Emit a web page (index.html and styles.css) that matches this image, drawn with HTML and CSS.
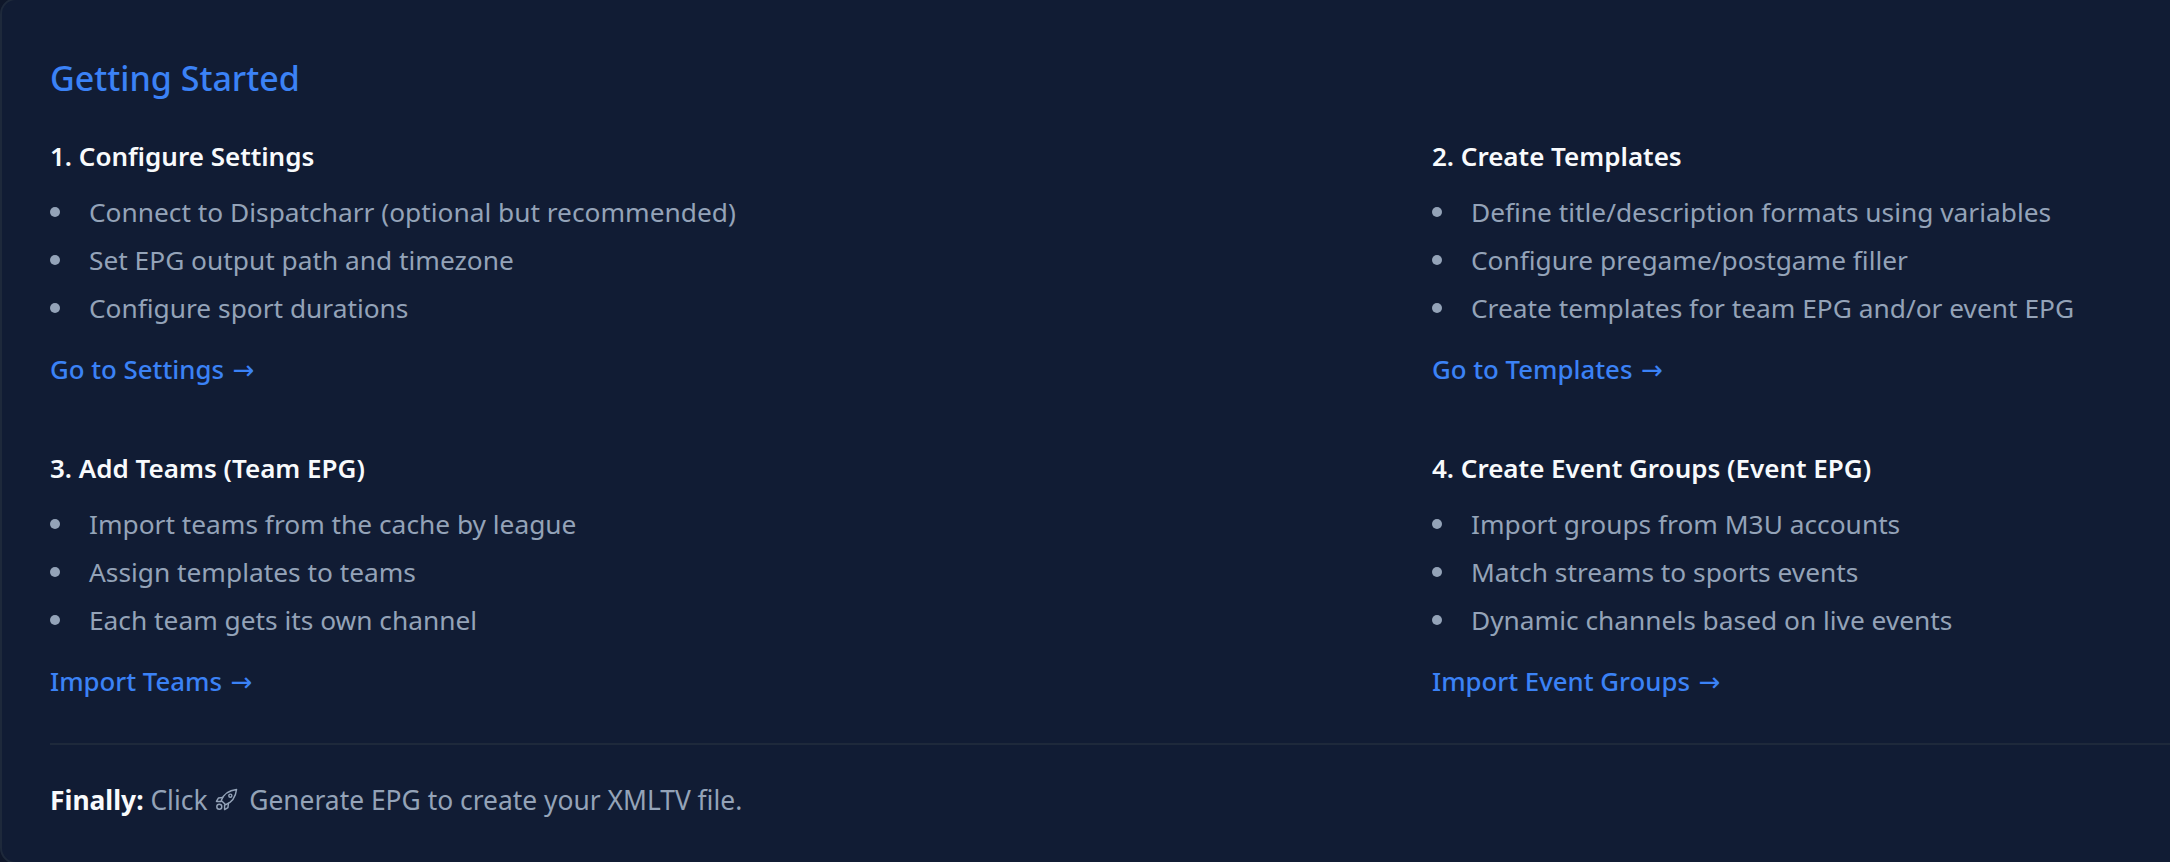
FILE: index.html
```html
<!DOCTYPE html>
<html lang="en">
<head>
    <meta charset="UTF-8">
    <title>Getting Started</title>
    <link rel="stylesheet" href="styles.css">
</head>
<body>
    <div class="card">
        <h2 class="card-title">Getting Started</h2>
        <div class="steps">
            <div class="step">
                <h3>1. Configure Settings</h3>
                <ul>
                    <li>Connect to Dispatcharr (optional but recommended)</li>
                    <li>Set EPG output path and timezone</li>
                    <li>Configure sport durations</li>
                </ul>
                <a class="step-link" href="#">Go to Settings <span class="arrow">→</span></a>
            </div>
            <div class="step">
                <h3>2. Create Templates</h3>
                <ul>
                    <li>Define title/description formats using variables</li>
                    <li>Configure pregame/postgame filler</li>
                    <li>Create templates for team EPG and/or event EPG</li>
                </ul>
                <a class="step-link" href="#">Go to Templates <span class="arrow">→</span></a>
            </div>
            <div class="step">
                <h3>3. Add Teams (Team EPG)</h3>
                <ul>
                    <li>Import teams from the cache by league</li>
                    <li>Assign templates to teams</li>
                    <li>Each team gets its own channel</li>
                </ul>
                <a class="step-link" href="#">Import Teams <span class="arrow">→</span></a>
            </div>
            <div class="step">
                <h3>4. Create Event Groups (Event EPG)</h3>
                <ul>
                    <li>Import groups from M3U accounts</li>
                    <li>Match streams to sports events</li>
                    <li>Dynamic channels based on live events</li>
                </ul>
                <a class="step-link" href="#">Import Event Groups <span class="arrow">→</span></a>
            </div>
        </div>
        <p class="finally"><strong>Finally:</strong> Click
            <svg class="rocket" viewBox="0 0 24 24" fill="none" stroke="currentColor" stroke-width="1.5" stroke-linejoin="round" stroke-linecap="round">
                <path d="M9 15.5 L6.5 13 C8.5 7.5 14 2.5 22.5 1.5 C21.5 10 16.5 15.5 11 17.5 Z"/>
                <path d="M8 10 L3.5 10.5 L1.5 14 L6.5 14"/>
                <path d="M14 16 L13.5 20.5 L10 22.5 L10 17.8"/>
                <circle cx="16" cy="8" r="1.6"/>
                <circle cx="4.5" cy="19.5" r="2.6"/>
            </svg>
            Generate EPG to create your XMLTV file.</p>
    </div>
</body>
</html>
```

FILE: styles.css
```css
html, body {
    margin: 0;
    padding: 0;
    height: 100%;
    overflow: hidden;
    background-color: #0f172a;
}
body {
    font-family: "Noto Sans", "Open Sans", Arial, sans-serif;
    color: #94a3b8;
}
.card {
    box-sizing: border-box;
    width: 2818px;
    height: 866px;
    margin-top: -2px;
    padding: 59px 48px 0 48px;
    background-color: #111c34;
    border: 2px solid #1e293b;
    border-radius: 16px;
}
.card-title {
    margin: 0 0 42px;
    font-size: 34px;
    line-height: 38px;
    font-weight: 500;
    color: #3b82f6;
}
.steps {
    display: grid;
    grid-template-columns: 1335px 1335px;
    column-gap: 47px;
    row-gap: 42px;
}
.step {
    height: 270px;
}
.step h3 {
    margin: 0 0 15px;
    font-size: 26px;
    line-height: 34px;
    font-weight: 600;
    color: #f8fafc;
}
.step ul {
    margin: 0 0 19px;
    padding: 0;
    list-style: none;
}
.step li {
    display: flex;
    align-items: center;
    font-size: 26.3px;
    line-height: 48px;
}
.step li::before {
    content: "";
    flex: none;
    width: 10px;
    height: 10px;
    margin-right: 29px;
    border-radius: 50%;
    background-color: #94a3b8;
}
.step-link {
    font-size: 25.8px;
    line-height: 36px;
    font-weight: 500;
    color: #3b82f6;
    text-decoration: none;
}
.arrow {
    margin-left: 2px;
    font-family: "DejaVu Sans", sans-serif;
    font-size: 26px;
    font-weight: 400;
}
.finally {
    margin: 22px 0 0;
    padding-top: 37px;
    border-top: 2px solid #1e293b;
    font-size: 26.4px;
    line-height: 36px;
}
.finally strong {
    font-weight: 700;
    color: #f8fafc;
}
.rocket {
    width: 23px;
    height: 23px;
    margin: 0 4px 0 1px;
    vertical-align: -1px;
}
```
